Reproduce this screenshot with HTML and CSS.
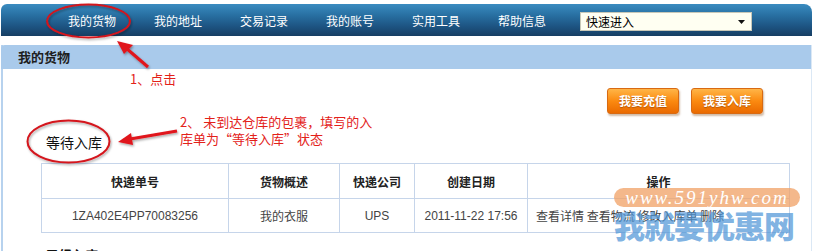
FILE: index.html
```html
<!DOCTYPE html>
<html lang="zh-CN">
<head>
<meta charset="utf-8">
<title>我的货物</title>
<link rel="stylesheet" href="styles.css">
</head>
<body>
<div class="page">
  <nav class="topnav">
    <a class="nav-item">我的货物</a>
    <a class="nav-item">我的地址</a>
    <a class="nav-item">交易记录</a>
    <a class="nav-item">我的账号</a>
    <a class="nav-item">实用工具</a>
    <a class="nav-item">帮助信息</a>
    <div class="quick-select">
      <span>快速进入</span>
      <svg class="caret" width="7" height="4" viewBox="0 0 7 4"><path d="M0 0H7L3.5 4Z" fill="#111"/></svg>
    </div>
  </nav>

  <section class="panel">
    <div class="panel-head">我的货物</div>
    <div class="panel-body">
      <div class="actions">
        <a class="btn">我要充值</a>
        <a class="btn">我要入库</a>
      </div>
      <div class="section-title">等待入库</div>
      <table class="grid">
        <colgroup>
          <col class="c1"><col class="c2"><col class="c3"><col class="c4"><col class="c5">
        </colgroup>
        <thead>
          <tr><th>快递单号</th><th>货物概述</th><th>快递公司</th><th>创建日期</th><th>操作</th></tr>
        </thead>
        <tbody>
          <tr>
            <td class="num">1ZA402E4PP70083256</td>
            <td>我的衣服</td>
            <td class="num">UPS</td>
            <td class="num">2011-11-22 17:56</td>
            <td class="ops">查看详情 查看物流 修改入库单 删除</td>
          </tr>
        </tbody>
      </table>
      <div class="section-title next">已经入库</div>
    </div>
  </section>

  <!-- annotation overlay -->
  <div class="note note1">1、点击</div>
  <div class="note note2">2、 未到达仓库的包裹，填写的入<br>库单为“等待入库”状态</div>
  <svg class="marks" width="813" height="251" viewBox="0 0 813 251">
    <defs>
      <filter id="sh" x="-20%" y="-20%" width="140%" height="140%">
        <feDropShadow dx="1" dy="1.5" stdDeviation="1.2" flood-color="#000" flood-opacity="0.35"/>
      </filter>
    </defs>
    <g filter="url(#sh)" fill="none" stroke="#d4141c" stroke-width="2">
      <ellipse cx="88.5" cy="21" rx="41.5" ry="16.5"/>
      <ellipse cx="68.5" cy="141.5" rx="41" ry="21"/>
    </g>
    <g filter="url(#sh)">
      <line x1="148" y1="67" x2="126" y2="48" stroke="#e0141c" stroke-width="3"/>
      <path d="M117 41 L133 45 L124 54 Z" fill="#e0141c"/>
      <line x1="177" y1="131" x2="130" y2="139" stroke="#e0141c" stroke-width="3"/>
      <path d="M118 142 L131 133 L133 145 Z" fill="#e0141c"/>
    </g>
  </svg>

  <div class="watermark">
    <div class="wm-pill">www.591yhw.com</div>
    <div class="wm-big">我就要优惠网</div>
  </div>
</div>
</body>
</html>
```

FILE: styles.css
```css
* { box-sizing: border-box; }
html, body { margin: 0; padding: 0; background: #fff; }
body {
  font-family: "Noto Sans CJK SC", "Liberation Sans", sans-serif;
  font-size: 12px;
  color: #333;
  overflow: hidden;
}
.page {
  position: relative;
  width: 813px;
  height: 251px;
  overflow: hidden;
}

/* top navigation */
.topnav {
  margin: 4px 1px 0 1px;
  height: 32px;
  border-radius: 6px 8px 0 0;
  background: linear-gradient(#3a8cc0 0%, #2870a2 35%, #1d5482 70%, #163e63 100%);
  display: flex;
  align-items: center;
  padding-left: 48px;
}
.nav-item {
  width: 86px;
  text-align: center;
  color: #fff;
  font-size: 12px;
  line-height: 16px;
  padding-top: 2px;
}
.quick-select {
  margin-left: 15px;
  width: 172px;
  height: 19px;
  background: #fffff2;
  border: 1px solid #c8c8b8;
  display: flex;
  align-items: center;
  justify-content: space-between;
  padding: 0 6px 0 5px;
  color: #000;
  font-size: 12px;
  margin-top: 3px;
}
.caret { display: block; }

/* panel */
.panel {
  margin: 9px 1px 0 1px;
  border-left: 2px solid #b7d2ee;
  border-right: 1px solid #dbe8f5;
  height: 220px;
}
.panel-head {
  height: 24px;
  background: #a9caeb;
  margin-left: -2px;
  border-radius: 4px 0 0 0;
  padding-left: 17px;
  font-size: 13px;
  font-weight: bold;
  line-height: 24px;
  color: #1e1e1e;
}
.panel-body {
  padding: 19px 0 0 38px;
}
.actions {
  display: flex;
  justify-content: flex-end;
  gap: 12px;
  padding-right: 48px;
}
.btn {
  width: 72px;
  height: 26px;
  border: 1px solid #d86a12;
  border-radius: 3px;
  background: linear-gradient(#ffb547 0%, #fb8a10 50%, #ea6a00 100%);
  box-shadow: 1px 2px 2px rgba(120, 60, 0, 0.35);
  color: #fff;
  font-weight: bold;
  font-size: 12px;
  line-height: 24px;
  text-align: center;
  text-shadow: 0 1px 1px rgba(140, 60, 0, 0.6);
}
.section-title {
  margin: 19px 0 0 5px;
  height: 18px;
  font-size: 14px;
  line-height: 18px;
  color: #111;
}
.section-title.next {
  margin-top: 13px;
  font-weight: bold;
  font-size: 13px;
}
.grid {
  margin-top: 12px;
  width: 748px;
  border-collapse: collapse;
  table-layout: fixed;
}
.c1 { width: 187px; }
.c2 { width: 111px; }
.c3 { width: 75px; }
.c4 { width: 113px; }
.c5 { width: 262px; }
.grid th, .grid td {
  border: 1px solid #c6d5ea;
  text-align: center;
  font-size: 12px;
}
.grid th {
  height: 35px;
  font-weight: bold;
  color: #222;
}
.grid td {
  height: 34px;
  color: #444;
}
.grid td.num { font-family: "Liberation Sans", Arial, sans-serif; }
.grid td.ops { text-align: left; padding-left: 8px; }

/* annotations (overlay) */
.note {
  position: absolute;
  color: #e32119;
  font-size: 13px;
  line-height: 17px;
}
.note1 { left: 130px; top: 70px; }
.note2 { left: 180px; top: 113px; }
.marks {
  position: absolute;
  left: 0;
  top: 0;
  pointer-events: none;
}

/* watermark */
.watermark {
  position: absolute;
  left: 614px;
  top: 186px;
  width: 186px;
}
.wm-pill {
  height: 19px;
  margin-top: 2px;
  border-radius: 10px;
  background: rgba(240, 160, 100, 0.75);
  color: #fff;
  font-family: "Liberation Serif", serif;
  font-style: italic;
  font-size: 19px;
  line-height: 19px;
  letter-spacing: 2px;
  text-align: center;
}
.wm-big {
  margin-top: -1px;
  font-size: 31px;
  line-height: 38px;
  font-weight: 900;
  letter-spacing: -1px;
  color: rgba(80, 150, 215, 0.72);
  white-space: nowrap;
}
```
